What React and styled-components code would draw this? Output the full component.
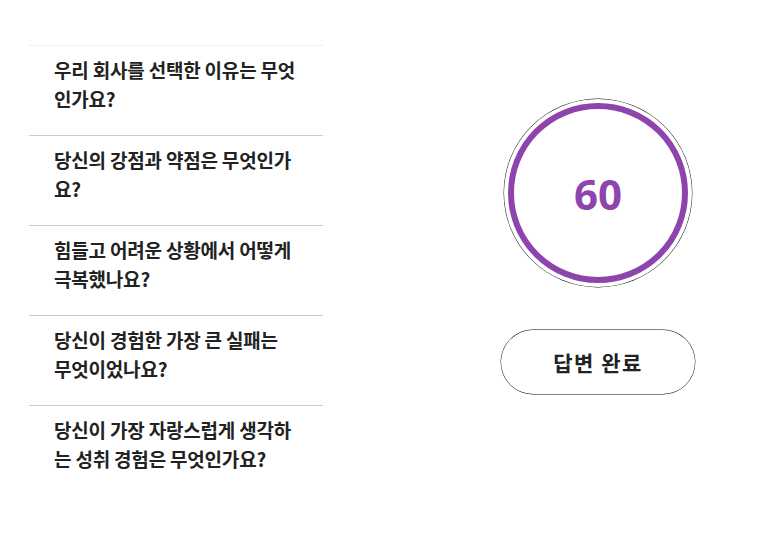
import React from 'react';
import styled, { createGlobalStyle } from 'styled-components';

const GlobalStyle = createGlobalStyle`
	html, body {
		margin: 0;
		padding: 0;
		background: #ffffff;
	}
	body {
		font-family: "Noto Sans CJK KR", "Noto Sans", sans-serif;
		color: #222222;
	}
`;

const Page = styled.div`
	display: grid;
	grid-template-columns: 294px 1fr;
	column-gap: 94px;
	padding: 45px 0 0 29px;
	width: 779px;
	box-sizing: border-box;
`;

const QuestionList = styled.ul`
	list-style: none;
	margin: 0;
	padding: 0;
	border-top: 1px solid #f0f0f0;
`;

const QuestionItem = styled.li`
	height: 90px;
	box-sizing: border-box;
	padding: 9px 10px 0 25px;
	font-size: 19px;
	font-weight: 700;
	line-height: 29px;
	letter-spacing: -0.2px;
	color: #222222;
	border-bottom: ${(props) => (props.last ? 'none' : '1px solid #cccccc')};
`;

const Side = styled.div`
	display: flex;
	flex-direction: column;
	align-items: center;
	padding-top: 54px;
	gap: 43px;
`;

const ScoreFrame = styled.div`
	width: 188px;
	height: 188px;
	box-sizing: border-box;
	border-radius: 50%;
	box-shadow: 0 0 0 0.4px #000000;
	display: flex;
	align-items: center;
	justify-content: center;
`;

const ScoreRing = styled.div`
	width: 180px;
	height: 180px;
	box-sizing: border-box;
	border-radius: 50%;
	border: 6px solid #8e44ad;
	display: flex;
	align-items: center;
	justify-content: center;
	font-family: "Open Sans", "Noto Sans", sans-serif;
	font-weight: 700;
	font-size: 42px;
	color: #8e44ad;
`;

const DoneButton = styled.button`
	width: 194px;
	height: 64px;
	border: none;
	border-radius: 32px;
	background: #ffffff;
	box-shadow: 0 0 0 0.4px #000000;
	font-family: "Noto Sans CJK KR", "Noto Sans", sans-serif;
	font-weight: 700;
	font-size: 21px;
	letter-spacing: 1.5px;
	color: #222222;
	cursor: pointer;
`;

const questions = [
	['우리 회사를 선택한 이유는 무엇', '인가요?'],
	['당신의 강점과 약점은 무엇인가', '요?'],
	['힘들고 어려운 상황에서 어떻게', '극복했나요?'],
	['당신이 경험한 가장 큰 실패는', '무엇이었나요?'],
	['당신이 가장 자랑스럽게 생각하', '는 성취 경험은 무엇인가요?'],
];

export default function App() {
	return (
		<>
			<GlobalStyle />
			<Page>
				<QuestionList>
					{questions.map((lines, i) => (
						<QuestionItem key={i} last={i === questions.length - 1}>
							{lines[0]}
							<br />
							{lines[1]}
						</QuestionItem>
					))}
				</QuestionList>

				<Side>
					<ScoreFrame>
						<ScoreRing>60</ScoreRing>
					</ScoreFrame>
					<DoneButton>답변 완료</DoneButton>
				</Side>
			</Page>
		</>
	);
}
